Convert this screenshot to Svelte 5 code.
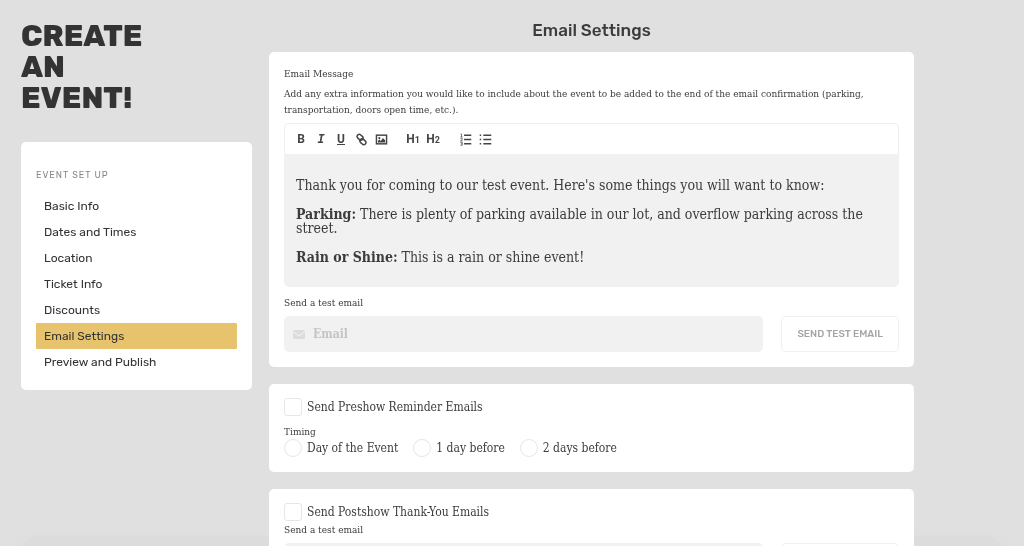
<script lang="ts">
	const steps = [
		'Basic Info',
		'Dates and Times',
		'Location',
		'Ticket Info',
		'Discounts',
		'Email Settings',
		'Preview and Publish'
	];
	const timings = ['Day of the Event', '1 day before', '2 days before'];

	let current = $state('Email Settings');
	let preshow = $state(false);
	let postshow = $state(false);
	let timing = $state('');
</script>

{#snippet testEmail(id: string)}
	<label class="small-label" for={id}>Send a test email</label>
	<div class="test-row">
		<div class="email-field">
			<svg viewBox="0 0 12 9" aria-hidden="true">
				<path d="M1 0h10q1 0 1 1L6 5.500 0 1q0-1 1-1zM0 2.300l6 4.400 6-4.400V8q0 1-1 1H1Q0 9 0 8z" />
			</svg>
			<input {id} type="email" placeholder="Email" />
		</div>
		<button class="send" type="button">Send Test Email</button>
	</div>
{/snippet}

<div class="page">
	<aside>
		<h1>Create<br />an<br />Event!</h1>
		<nav class="card" aria-labelledby="nav-title">
			<p id="nav-title">Event set up</p>
			<ul>
				{#each steps as step}
					<li>
						<a href="#{step}" class:active={step === current} onclick={() => (current = step)}>
							{step}
						</a>
					</li>
				{/each}
			</ul>
		</nav>
	</aside>

	<main>
		<h2>Email Settings</h2>

		<section class="card message">
			<div class="small-label" id="message-label">Email Message</div>
			<p class="help">
				Add any extra information you would like to include about the event to be added to the end of
				the email confirmation (parking, transportation, doors open time, etc.).
			</p>
			<div class="editor">
				<div class="toolbar" role="toolbar">
					<div class="group">
						<button type="button" class="letter" aria-label="Bold">B</button>
						<button type="button" class="letter italic" aria-label="Italic">I</button>
						<button type="button" class="letter" aria-label="Underline"><span class="under">U</span></button>
						<button type="button" aria-label="Link">
							<svg viewBox="0 0 18 18">
								<g class="line" transform="rotate(42 9 9)">
									<rect x="1" y="5" width="9" height="6" rx="3" />
									<rect x="8" y="7" width="9" height="6" rx="3" />
								</g>
							</svg>
						</button>
						<button type="button" aria-label="Image">
							<svg viewBox="0 0 18 18">
								<rect class="line" x="2" y="3" width="14" height="12" />
								<circle cx="6" cy="7" r="1.500" />
								<path d="M4 13v-2l2-2 2 2 3-4 3 3v3z" />
							</svg>
						</button>
					</div>
					<div class="group">
						<button type="button" class="letter heading" aria-label="Heading 1">H<small>1</small></button>
						<button type="button" class="letter heading" aria-label="Heading 2">H<small>2</small></button>
					</div>
					<div class="group">
						<button type="button" aria-label="Numbered list">
							<svg viewBox="0 0 18 18">
								<path class="line" d="M7 3h10M7 9h10M7 15h10" />
								<path class="thin" d="M2 1.500h1.500v4M2 5.500h3M2 7.500h2.500v1.500L2 11h3M2 13h2.500v4H2M2.500 15h2" />
							</svg>
						</button>
						<button type="button" aria-label="Bulleted list">
							<svg viewBox="0 0 18 18">
								<path class="line" d="M6 3h11M6 9h11M6 15h11M1 3h2M1 9h2M1 15h2" />
							</svg>
						</button>
					</div>
				</div>
				<div class="content" contenteditable="true" role="textbox" tabindex="0" aria-labelledby="message-label">
					<p>Thank you for coming to our test event. Here's some things you will want to know:</p>
					<p>
						<strong>Parking:</strong> There is plenty of parking available in our lot, and overflow parking
						across the street.
					</p>
					<p><strong>Rain or Shine:</strong> This is a rain or shine event!</p>
				</div>
			</div>
			{@render testEmail('message-test')}
		</section>

		<section class="card reminder">
			<label class="option"><input type="checkbox" bind:checked={preshow} />Send Preshow Reminder Emails</label>
			<fieldset>
				<legend class="small-label">Timing</legend>
				<div class="options">
					{#each timings as value}
						<label class="option"><input type="radio" name="timing" {value} bind:group={timing} />{value}</label>
					{/each}
				</div>
			</fieldset>
		</section>

		<section class="card thanks">
			<label class="option"><input type="checkbox" bind:checked={postshow} />Send Postshow Thank-You Emails</label>
			{@render testEmail('postshow-test')}
		</section>
	</main>
</div>

<style>
	:global(html) {
		scrollbar-width: none;
	}
	:global(body) {
		background: #e0e0e0;
		color: #3c3c3c;
		font-family: 'Roboto Slab', 'DejaVu Serif Condensed', 'DejaVu Serif', serif;
		font-size: 10px;
	}
	:global(body)::before {
		content: '';
		position: fixed;
		z-index: -1;
		left: 20px;
		right: 20px;
		bottom: -30px;
		height: 40px;
		border-radius: 30px;
		background: #dcdcdc;
		box-shadow: 0 0 6px #dcdcdc;
	}
	.page {
		display: grid;
		grid-template-columns: minmax(0, 231fr) minmax(0, 645fr) minmax(0, 72fr);
		gap: 17px;
		padding: 0 21px 21px;
	}
	h1,
	h2,
	nav,
	.send {
		font-family: Rubik, Roboto, sans-serif;
	}
	h1 {
		margin: 21px 0 28px;
		color: #333;
		font-size: 30px;
		line-height: 31px;
		font-weight: 800;
		text-transform: uppercase;
	}
	h2 {
		margin: 18px 0 10px;
		font-size: 17px;
		line-height: 24px;
		font-weight: 500;
		text-align: center;
	}
	.card {
		background: #fff;
		border-radius: 5px;
	}

	nav {
		padding: 25px 15px 15px;
	}
	nav p {
		margin: 0 0 10px;
		color: #888;
		font-size: 9px;
		line-height: 16px;
		letter-spacing: 1px;
		text-transform: uppercase;
	}
	nav ul {
		margin: 0;
		padding: 0;
		list-style: none;
	}
	nav a {
		display: block;
		padding: 0 8px;
		border-radius: 1px;
		color: #333;
		font-size: 12px;
		line-height: 26px;
		text-decoration: none;
	}
	nav a.active {
		background: #e8c36d;
	}

	section {
		margin-bottom: 17px;
		padding: 14px 15px 15px;
	}
	section.message {
		padding-top: 15px;
	}
	.small-label {
		display: block;
		padding: 0;
		line-height: 14px;
	}
	.help {
		margin: 5px 0;
		line-height: 16px;
	}
	.editor {
		margin-bottom: 9px;
	}
	.toolbar {
		display: flex;
		gap: 12px;
		box-sizing: border-box;
		height: 31px;
		padding: 5px 6px;
		border: 1px solid #f0eee9;
		border-bottom: 0;
		border-radius: 5px 5px 0 0;
	}
	.group {
		display: flex;
	}
	.group button {
		display: flex;
		align-items: center;
		justify-content: center;
		width: 20px;
		height: 20px;
		padding: 0;
		border: 0;
		background: none;
		color: #444;
		cursor: pointer;
	}
	.group svg {
		width: 13px;
		height: 13px;
		fill: #444;
	}
	.line,
	.thin {
		fill: none;
		stroke: #444;
		stroke-width: 2;
	}
	.thin {
		stroke-width: 1;
	}
	.group .letter {
		font: 700 12px/12px Roboto, sans-serif;
	}
	.group .italic {
		font: italic 700 12px/12px 'DejaVu Sans Mono', monospace;
	}
	.under {
		border-bottom: 1px solid #444;
		line-height: 10px;
	}
	.heading small {
		padding-top: 2px;
		font-size: 9px;
	}
	.content {
		padding: 24px 12px 23px;
		border-radius: 0 0 5px 5px;
		background: #f1f1f1;
		font-size: 14px;
		line-height: 14px;
		outline: 0;
	}
	.content p {
		margin: 0 0 15px;
	}
	.content p:last-child {
		margin-bottom: 0;
	}

	.test-row {
		display: flex;
		gap: 18px;
		margin-top: 6px;
	}
	.email-field {
		display: flex;
		flex: 1;
		align-items: center;
		gap: 8px;
		min-width: 0;
		padding: 0 9px;
		border-radius: 5px;
		background: #f1f1f1;
	}
	.email-field svg {
		width: 12px;
		height: 9px;
		fill: #dcdcdc;
	}
	.email-field input {
		flex: 1;
		min-width: 0;
		padding: 0;
		border: 0;
		background: none;
		color: #333;
		font: 700 12px/16px 'Roboto Slab', 'DejaVu Serif Condensed', 'DejaVu Serif', serif;
		outline: 0;
	}
	.email-field input::placeholder {
		color: #c4c4c4;
		opacity: 1;
	}
	.send {
		height: 36px;
		padding: 0 15px;
		border: 1px solid #f0f0f0;
		border-radius: 5px;
		background: #fff;
		color: #a5a5a5;
		font-size: 10px;
		font-weight: 500;
		text-transform: uppercase;
	}

	.option {
		display: flex;
		align-items: center;
		gap: 5px;
		font-size: 12px;
		line-height: 18px;
	}
	.option input {
		appearance: none;
		box-sizing: border-box;
		width: 18px;
		height: 18px;
		margin: 0;
		border: 1px solid #e8e6e2;
		border-radius: 3px;
		background: #fff;
	}
	.option input[type='radio'] {
		border-radius: 50%;
	}
	.option input:checked {
		background: #e8c36d;
	}
	fieldset {
		margin: 9px 0 0;
		padding: 0;
		border: 0;
	}
	.options {
		display: flex;
		gap: 15px;
	}
	.thanks .small-label {
		margin-top: 2px;
	}
</style>
